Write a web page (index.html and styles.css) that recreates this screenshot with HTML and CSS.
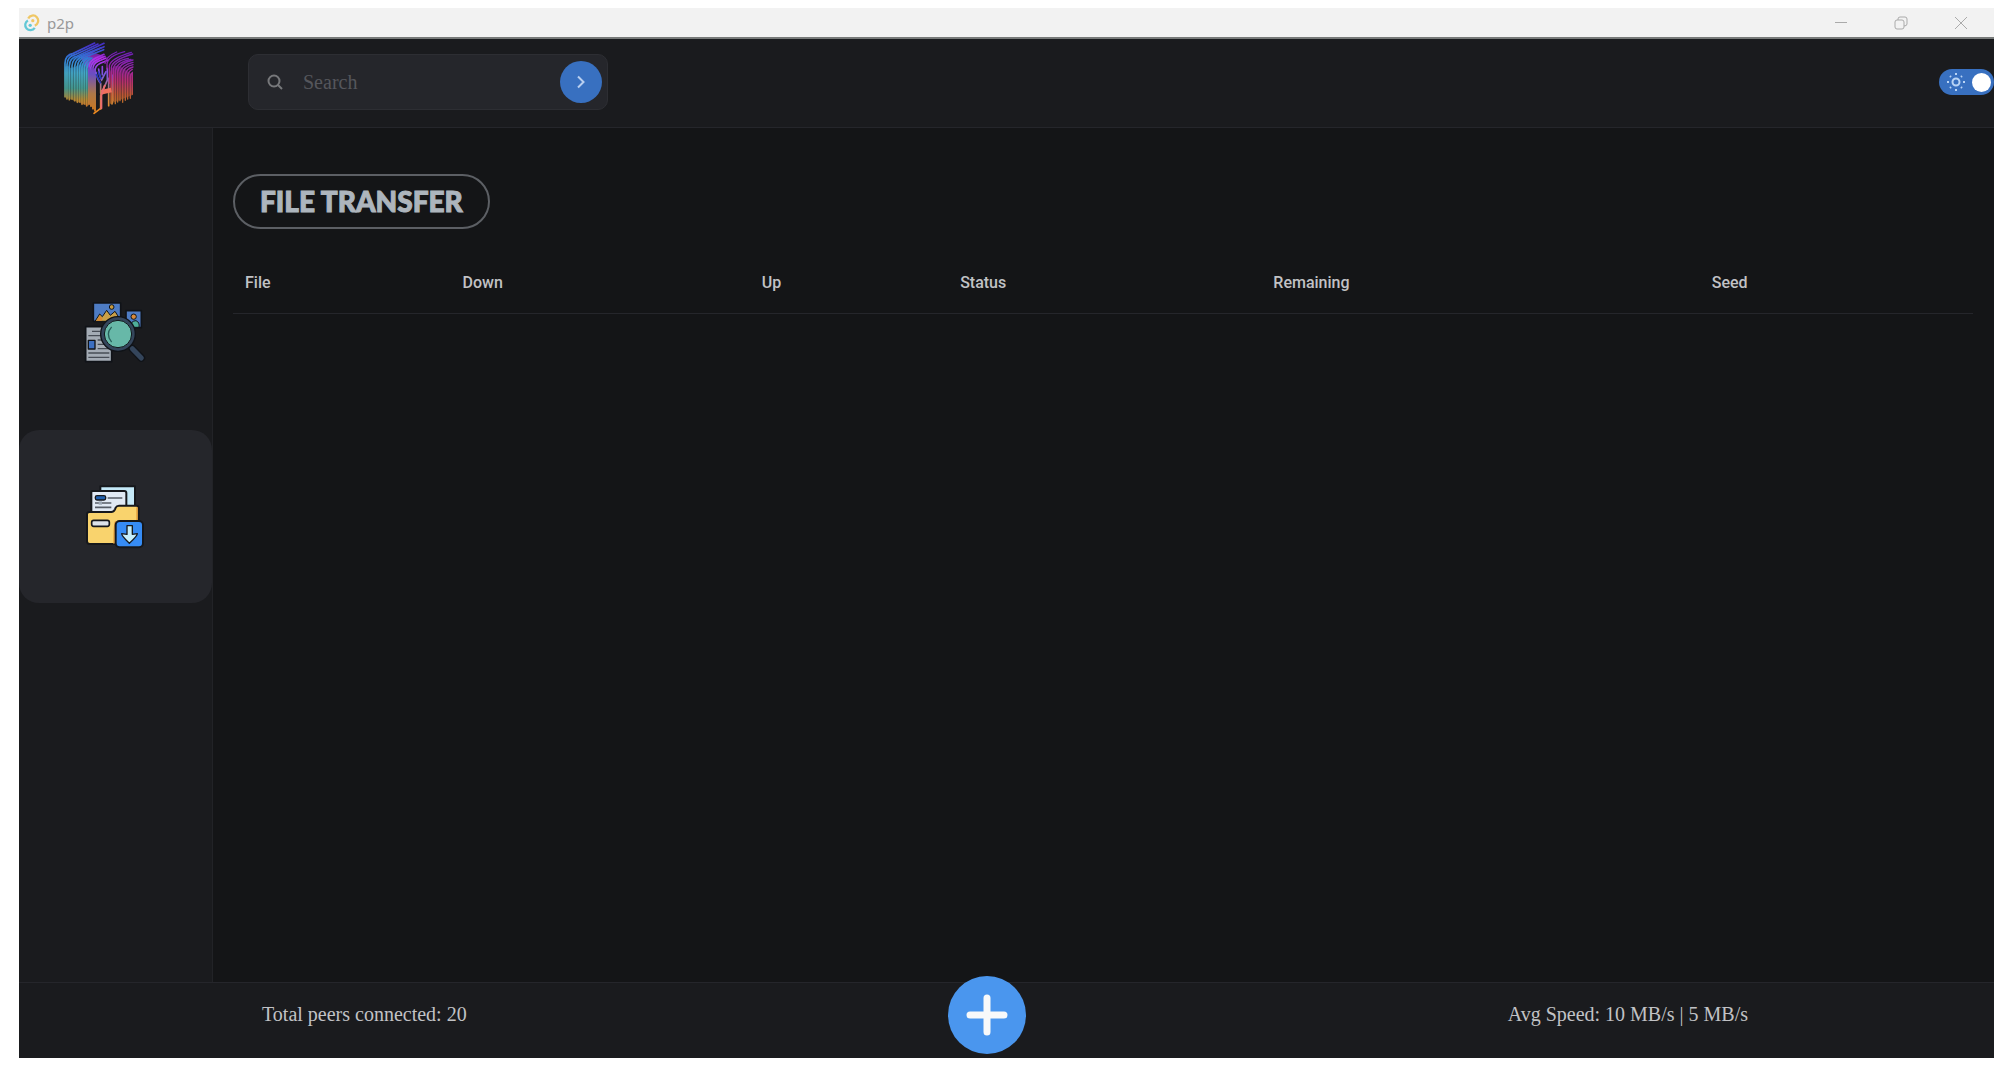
FILE: index.html
```html
<!DOCTYPE html>
<html lang="en">
<head>
<meta charset="utf-8">
<title>p2p</title>
<link rel="stylesheet" href="styles.css">
</head>
<body>
<div class="window">
  <div class="titlebar">
    <svg class="app-icon" viewBox="68 40 52 54" fill="none" stroke-width="7" aria-hidden="true">
      <path stroke="#efc765" d="M84 53A16 16 0 1 1 104 75"/>
      <path stroke="#62c8d6" d="M83 59A16 16 0 1 0 104 82"/>
      <circle cx="98" cy="60" r="5" fill="#efc765"/>
      <circle cx="90" cy="74" r="5" fill="#62c8d6"/>
    </svg>
    <span class="app-name">p2p</span>
    <div class="window-controls">
      <button type="button" aria-label="Minimize"><svg viewBox="0 0 14 14"><path d="M1 6.500H13"/></svg></button>
      <button type="button" aria-label="Restore"><svg viewBox="0 0 14 14"><rect x="1" y="4" width="9" height="9" rx="2"/><path d="M4 4V3Q4 1 6 1H11Q13 1 13 3V8Q13 10 10 10"/></svg></button>
      <button type="button" aria-label="Close"><svg viewBox="0 0 14 14"><path d="M1 1L13 13M13 1L1 13"/></svg></button>
    </div>
  </div>

  <header class="header">
    <svg class="logo" viewBox="189 126 216 222" fill="none" stroke-linecap="round" role="img" aria-label="p2p logo">
      <defs>
        <linearGradient id="left" gradientUnits="userSpaceOnUse" x1="240" y1="135" x2="240" y2="335">
          <stop offset="0" stop-color="#4630c8"/><stop offset=".2" stop-color="#2f7bd6"/><stop offset=".42" stop-color="#43a8c8"/><stop offset=".65" stop-color="#459b91"/><stop offset=".82" stop-color="#b58b35"/><stop offset="1" stop-color="#e06a24"/>
        </linearGradient>
        <linearGradient id="mid" gradientUnits="userSpaceOnUse" x1="300" y1="145" x2="290" y2="340">
          <stop offset="0" stop-color="#5d25b8"/><stop offset=".15" stop-color="#b52cea"/><stop offset=".4" stop-color="#7a58e0"/><stop offset=".7" stop-color="#c98a50"/><stop offset="1" stop-color="#f08a1c"/>
        </linearGradient>
        <linearGradient id="right" gradientUnits="userSpaceOnUse" x1="365" y1="155" x2="355" y2="325">
          <stop offset="0" stop-color="#6d20b5"/><stop offset=".25" stop-color="#9222ad"/><stop offset=".5" stop-color="#b52d72"/><stop offset=".75" stop-color="#bd5635"/><stop offset="1" stop-color="#b87a20"/>
        </linearGradient>
      </defs>
      <path fill="url(#left)" opacity=".6" d="M195 200Q205 195 213 205L225 200L265 185V318L195 292Z"/>
      <path fill="url(#right)" opacity=".6" d="M330 215Q340 190 362 200L398 225V285L330 312Z"/>
      <path fill="url(#mid)" opacity=".7" d="M240 170L275 155L312 168L285 190L262 205Z"/>
      <g stroke="url(#left)" stroke-width="5">
        <path d="M195 290V190Q195 165 220 160L284 129"/>
        <path d="M201 297V194Q202 169 225 164L294 132"/>
        <path d="M208 299V197Q209 173 232 168L312 130"/>
        <path d="M216 297V198Q218 174 240 168L303 143"/>
        <path d="M224 302V199Q226 176 248 169L312 140"/>
        <path d="M232 307V200Q234 177 255 171L311 149"/>
        <path d="M239 306V202Q241 180 262 173"/>
        <path d="M246 313V203Q248 181 270 172"/>
        <path d="M253 312V204Q255 184 276 174"/>
        <path d="M260 318V206Q262 188 282 178"/>
      </g>
      <g stroke="url(#mid)" stroke-width="5">
        <path d="M267 313V208Q265 184 287 174L312 163"/>
        <path d="M273 319V210Q270 188 291 179L315 169"/>
        <path d="M279 326V212Q276 193 295 184L318 174"/>
        <path d="M285 333V214Q284 198 301 190L325 180"/>
        <path d="M302 327V286L322 240V205"/>
        <path d="M326 317V235M336 312V225M282 340L302 325"/>
        <path d="M288 217Q292 240 302 250V280M296 207Q298 230 305 240L318 215M307 200V224"/>
      </g>
      <g stroke="url(#right)" stroke-width="4">
        <path d="M315 190Q317 170 350 156"/>
        <path d="M321 206V191Q325 168 374 155"/>
        <path d="M328 250V197Q332 175 394 157"/>
        <path d="M334 309V202Q337 180 398 162"/>
        <path d="M340 302V207Q343 183 385 175"/>
        <path d="M346 311V212Q350 186 393 178"/>
        <path d="M353 306V215Q356 190 399 180"/>
        <path d="M360 302V219Q363 196 399 187"/>
        <path d="M368 307V222Q371 200 399 194"/>
        <path d="M376 301V225Q378 207 399 201"/>
        <path d="M383 297V227Q385 214 397 208"/>
        <path d="M391 295V230Q391 222 397 218V283"/>
      </g>
      <path stroke="#2837b8" stroke-width="5" d="M289 224L301 248M295 216L303 235"/>
      <path stroke="#f0705c" stroke-width="14" stroke-linecap="butt" d="M304 277L334 270"/>
      <path stroke="#e96c70" stroke-width="6" d="M304 325V285L314 257"/>
    </svg>
    <form class="search">
      <svg class="search-icon" viewBox="0 0 16 16" aria-hidden="true"><circle cx="7" cy="7" r="5.500"/><path d="M11 11L15 15"/></svg>
      <input class="search-input" type="text" placeholder="Search" aria-label="Search">
      <button class="search-button" type="button" aria-label="Run search">
        <svg viewBox="0 0 8 14"><path d="M1 1.500L6.500 7L1 12.500"/></svg>
      </button>
    </form>
    <label class="theme">
      <input type="checkbox" role="switch" aria-label="Light theme" checked>
      <svg viewBox="0 0 20 20" aria-hidden="true"><circle cx="10" cy="10" r="3.500"/><path d="M10 1V3M10 17V19M1 10H3M17 10H19M4 4L5 5M15 15L16 16M4 16L5 15M15 5L16 4"/></svg>
    </label>
  </header>

  <div class="body">
    <nav class="sidebar" aria-label="Main">
      <a class="nav-item" href="#search" aria-label="Find files">
        <svg viewBox="74 62 180 180" stroke="#101318" stroke-width="5" stroke-linejoin="round" aria-hidden="true">
          <path fill="#4e7cc4" d="M99 65H181V120H99Z"/>
          <circle cx="154" cy="77" r="7" fill="#c89a3e" stroke-width="3"/>
          <path fill="#c9a049" stroke-width="3" d="M104 120L118 98L126 106L139 87L150 102L164 90L178 112V120Z"/>
          <path fill="#d98932" stroke="none" d="M108 118L118 103L126 111L124 118Z"/>
          <path fill="#4e7cc4" d="M197 88H243V139H197Z"/>
          <circle cx="220" cy="106" r="8" fill="#d98a3a" stroke-width="3"/>
          <path fill="#4fae9a" stroke-width="3" d="M208 138Q212 118 227 118Q239 123 236 138Z"/>
          <path fill="#a4acb5" d="M76 136H154V241H76Z"/>
          <path stroke="#474d56" d="M95 150H120M84 163H130M112 176H145M112 189H145M112 202H145M84 215H147M84 228H147" fill="none" stroke-width="4"/>
          <path fill="#3c6fc0" stroke-width="4" d="M84 177H104V203H84Z"/>
          <path stroke="#101318" stroke-width="23" stroke-linecap="round" d="M216 202L243 230"/>
          <path stroke="#34455b" stroke-width="15" stroke-linecap="round" d="M216 202L243 230"/>
          <circle cx="173" cy="158" r="52" fill="#34455b" stroke-width="4"/>
          <circle cx="173" cy="158" r="41" fill="#67b8a8" stroke-width="3"/>
          <path fill="none" stroke="#285f5a" stroke-width="4" stroke-linecap="round" d="M153 138Q135 158 153 181"/>
        </svg>
      </a>
      <a class="nav-item active" href="#transfers" aria-current="page" aria-label="File transfer">
        <svg viewBox="76 80 180 180" stroke="#16181c" stroke-width="6" stroke-linejoin="round" aria-hidden="true">
          <path fill="#c5e9f8" d="M122 78H226V145H122Z"/>
          <path fill="#e0e9f4" d="M95 96Q95 92 99 92H194Q200 92 200 98V165H95Z"/>
          <rect x="107" y="106" width="31" height="13" rx="5" fill="#1f5fae" stroke-width="4"/>
          <path fill="none" stroke="#555c66" stroke-width="5" d="M144 113H188M106 128H155M106 141H155"/>
          <path fill="#9aa5b2" stroke="none" d="M117 123H127V133H117Z"/>
          <path fill="#f9d36d" d="M82 162Q82 155 90 155H155Q162 155 166 147L168 142Q171 136 178 136H230Q237 136 237 143V251H90Q82 251 82 243Z"/>
          <path fill="none" stroke="#e49b37" stroke-width="4" d="M232 141V182M168 183Q163 188 163 250"/>
          <rect x="96" y="180" width="53" height="18" rx="6" fill="#dce2ea" stroke-width="5"/>
          <rect x="168" y="182" width="82" height="79" rx="12" fill="#368cf5"/>
          <path fill="#c7effb" stroke-width="4" d="M202 196H218V222L233 220Q233 226 209 249Q185 226 186 220L202 222Z"/>
        </svg>
      </a>
    </nav>
    <main class="content">
      <h1 class="title">FILE TRANSFER</h1>
      <table class="transfers">
        <colgroup><col class="col-file"><col class="col-down"><col class="col-up"><col class="col-status"><col class="col-remaining"><col class="col-seed"></colgroup>
        <thead>
          <tr><th scope="col">File</th><th scope="col">Down</th><th scope="col">Up</th><th scope="col">Status</th><th scope="col">Remaining</th><th scope="col">Seed</th></tr>
        </thead>
      </table>
    </main>
  </div>

  <footer class="footer">
    <span>Total peers connected: 20</span>
    <button class="add" type="button" aria-label="Add file"><svg viewBox="0 0 42 42"><path d="M21 4V38M4 21H38"/></svg></button>
    <span>Avg Speed: 10 MB/s | 5 MB/s</span>
  </footer>
</div>
</body>
</html>
```
FILE: styles.css
```css
* { box-sizing: border-box; }

body {
  margin: 0;
  padding: 8px 17px 14px 19px;
  min-height: 100vh;
  display: flex;
  background: #fff;
  color: #c1c2c5;
  font-family: "Liberation Serif", "Times New Roman", serif;
  font-size: 20px;
}

button {
  display: flex;
  align-items: center;
  justify-content: center;
  padding: 0;
  border: 0;
  background: none;
}

svg { display: block; flex: none; }

.window {
  flex: 1;
  display: flex;
  flex-direction: column;
  background: #141517;
}

/* Title bar */
.titlebar {
  display: flex;
  align-items: center;
  height: 31px;
  padding: 0 8px 0 4px;
  background: #f2f2f2;
  border-bottom: 2px solid #777a79;
}
.app-icon { width: 17px; height: 18px; }
.app-name {
  margin-left: 7px;
  color: #999;
  font: 15px/20px "Noto Sans", sans-serif;
}
.window-controls { display: flex; gap: 10px; margin-left: auto; }
.window-controls button { width: 50px; height: 28px; }
.window-controls svg { width: 14px; height: 14px; fill: none; stroke: #aaa; stroke-width: 1; }

/* Header */
.header {
  display: flex;
  align-items: center;
  height: 89px;
  padding: 0 0 2px 44px;
  background: #1a1b1e;
  border-bottom: 1px solid #25262b;
}
.logo { width: 72px; height: 74px; margin-bottom: 6px; }
.search {
  display: flex;
  align-items: center;
  width: 360px;
  height: 56px;
  margin-left: 113px;
  padding: 0 5px 0 18px;
  background: #25262b;
  border: 1px solid #2d2e33;
  border-radius: 10px;
}
.search-icon { width: 16px; height: 16px; fill: none; stroke: #77787b; stroke-width: 2; }
.search-input {
  flex: 1;
  min-width: 0;
  height: 40px;
  padding: 0 20px;
  border: 0;
  background: none;
  color: inherit;
  font: inherit;
}
.search-input::placeholder { color: #55565c; opacity: 1; }
.search-button { width: 42px; height: 42px; border-radius: 50%; background: #3870c0; }
.search-button svg { width: 8px; height: 14px; fill: none; stroke: #b8cff0; stroke-width: 2; }

.theme { position: relative; margin-left: auto; }
.theme input {
  appearance: none;
  display: flex;
  align-items: center;
  justify-content: flex-end;
  width: 55px;
  height: 26px;
  margin: 0;
  padding-right: 3px;
  border-radius: 13px;
  background: #3870c0;
}
.theme input::before { content: ""; width: 19px; height: 19px; border-radius: 50%; background: #fff; }
.theme svg {
  position: absolute;
  top: 3px;
  left: 7px;
  width: 20px;
  height: 20px;
  fill: none;
  stroke: #b9d4f5;
  stroke-width: 2;
}

/* Body */
.body { flex: 1; display: flex; }
.sidebar {
  display: flex;
  flex-direction: column;
  gap: 12px;
  width: 194px;
  padding-top: 117px;
  background: #1a1b1e;
  border-right: 1px solid #222327;
}
.nav-item {
  display: flex;
  align-items: center;
  justify-content: center;
  height: 173px;
  padding-right: 2px;
  border-radius: 20px;
}
.nav-item svg { width: 60px; height: 60px; overflow: visible; }
.active { background: #25262b; }

.content { flex: 1; padding: 46px 21px 0 20px; }
.title {
  width: fit-content;
  margin: 0;
  padding: 0 25px;
  border: 2px solid #5c5f64;
  border-radius: 28px;
  color: #adb5bd;
  font: 900 28px/51px Lato, sans-serif;
  -webkit-text-stroke: 1px #adb5bd;
}
.transfers {
  width: 100%;
  margin-top: 24px;
  table-layout: fixed;
  border-collapse: collapse;
}
.transfers th {
  padding: 18px 12px;
  border-bottom: 1px solid #25262b;
  text-align: left;
  font: 500 16px/24px Roboto, sans-serif;
}
.col-file { width: 12.5%; }
.col-down { width: 17.2%; }
.col-up { width: 11.4%; }
.col-status { width: 18%; }
.col-remaining { width: 25.2%; }
.col-seed { width: 15.7%; }

/* Footer */
.footer {
  display: flex;
  align-items: center;
  justify-content: space-between;
  height: 76px;
  padding: 0 246px 12px 243px;
  background: #1a1b1e;
  border-top: 1px solid #25262b;
}
.add { width: 78px; height: 78px; margin: -14px 0; border-radius: 50%; background: #4a96ee; }
.add svg { width: 42px; height: 42px; fill: none; stroke: #f8f9fa; stroke-width: 7; stroke-linecap: round; }
```
